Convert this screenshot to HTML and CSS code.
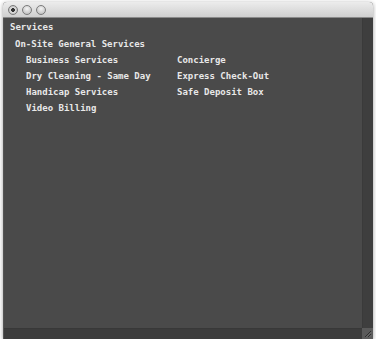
FILE: index.html
```html
<!DOCTYPE html>
<html>
<head>
<meta charset="utf-8">
<link rel="stylesheet" href="styles.css">
</head>
<body>
<div class="window">
  <div class="titlebar">
    <span class="btn btn-close"></span>
    <span class="btn"></span>
    <span class="btn"></span>
  </div>
  <div class="body">
    <div class="content">
      <div class="line l0">Services</div>
      <div class="line l1">On-Site General Services</div>
      <div class="grid">
        <div class="line">Business Services</div>
        <div class="line">Concierge</div>
        <div class="line">Dry Cleaning - Same Day</div>
        <div class="line">Express Check-Out</div>
        <div class="line">Handicap Services</div>
        <div class="line">Safe Deposit Box</div>
        <div class="line">Video Billing</div>
      </div>
    </div>
    <div class="vscroll"></div>
    <div class="hscroll"></div>
    <div class="corner">
      <svg width="11" height="11" viewBox="0 0 11 11"><path d="M9 3 L3 9 M9 6 L6 9" stroke="#2e2e2e" stroke-width="1"/><path d="M9.5 4 L4 9.5 M9.5 7 L7 9.5" stroke="#6a6a6a" stroke-width="1"/></svg>
    </div>
  </div>
</div>
</body>
</html>
```
FILE: styles.css
```css
html, body {
  margin: 0;
  padding: 0;
  background: #ffffff;
}
.window {
  margin: 2px 0 0 3px;
  width: 370px;
  height: 337px;
  display: flex;
  flex-direction: column;
  box-shadow: 0 1px 4px rgba(0,0,0,0.4);
  border-radius: 4px 4px 0 0;
  overflow: hidden;
  background: #484848;
}
.titlebar {
  height: 15px;
  flex: none;
  background: linear-gradient(#ececec, #cfcfcf);
  border-bottom: 1px solid #8a8a8a;
  display: flex;
  align-items: center;
  gap: 4px;
  padding-left: 5px;
}
.btn {
  width: 10px;
  height: 10px;
  border-radius: 50%;
  box-sizing: border-box;
  border: 1px solid #7a7a7a;
  background: radial-gradient(circle at 50% 35%, #f4f4f4, #b4b4b4);
}
.btn-close {
  background: radial-gradient(circle, #333 0 1.6px, #e0e0e0 2.2px, #a8a8a8 100%);
}
.body {
  flex: 1;
  display: grid;
  grid-template-columns: 1fr 11px;
  grid-template-rows: 1fr 11px;
  border-left: 1px solid #555;
}
.content {
  background: #4a4a4a;
  padding: 1px 0 0 6px;
  font-family: "DejaVu Sans Mono", monospace;
  font-weight: bold;
  font-size: 9px;
  color: #e8e8e8;
}
.line {
  height: 16px;
  line-height: 16px;
  white-space: nowrap;
}
.l0 {
  margin-bottom: 1px;
}
.l1 {
  padding-left: 5px;
}
.grid {
  display: grid;
  grid-template-columns: 151px 1fr;
  padding-left: 16px;
}
.vscroll {
  background: #3e3e3e;
  border-left: 1px solid #3a3a3a;
}
.hscroll {
  background: #3c3c3c;
  border-top: 1px solid #383838;
}
.corner {
  background: #5a5a5a;
}
.corner svg {
  display: block;
}
```
